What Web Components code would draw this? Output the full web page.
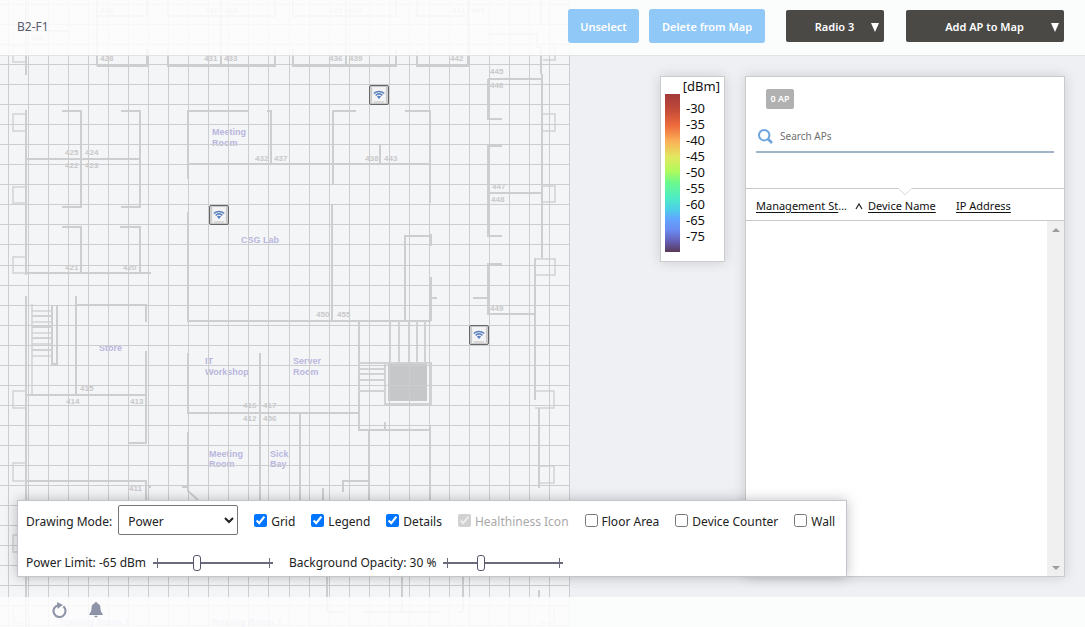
<!DOCTYPE html>
<html lang="en">
<head>
<meta charset="utf-8">
<title>B2-F1</title>
<style>
html, body { margin: 0; height: 100%; overflow: hidden; }
body { font: 12px/20px "Noto Sans", "Open Sans", sans-serif; color: #222; background: #eff0f4; }
</style>
</head>
<body>
<ap-planner></ap-planner>
<script>
function define(name, html, setup) {
  const tpl = document.createElement('template');
  tpl.innerHTML = '<style>*{box-sizing:border-box}</style>' + html;
  customElements.define(name, class extends HTMLElement {
    constructor() {
      super();
      this.attachShadow({ mode: 'open' }).append(tpl.content.cloneNode(true));
    }
    connectedCallback() { if (setup && !this.ready) { this.ready = true; setup(this, this.shadowRoot); } }
  });
}

/* Access point marker on the map */
define('ap-node', `
<style>
:host { display: block; width: 20px; height: 20px; }
svg { display: block; }
</style>
<svg width="20" height="20" viewBox="0 0 20 20">
  <rect x=".5" y=".5" width="19" height="19" rx="1.5" fill="#d0d0d0" stroke="#666"/>
  <rect x="2.5" y="1.5" width="15" height="17" rx="1" fill="#ededee" stroke="#bbb" stroke-width=".6"/>
  <rect x="4" y="2" width="12" height="14" fill="#f3f3f5"/>
  <g fill="none" stroke="#5b82bd" stroke-width="1.5">
    <path d="M4.800 8.400Q10 4.400 15.200 8.400"/><path d="M6.600 10.400Q10 7.400 13.400 10.400"/>
  </g>
  <path d="M7.800 11.600Q10 9.800 12.200 11.600L10 14Z" fill="#5b82bd"/>
  <path d="M5.500 17h9" stroke="#999" stroke-dasharray="1 1"/>
</svg>`);

/* Floor plan with its grid */
define('floor-map', `
<style>
:host { display: block; position: relative; overflow: hidden; background: #f4f5f7; }
svg { display: block; }
ap-node { position: absolute; }
.rooms { font: bold 9px/11px "Liberation Sans", Arial, sans-serif; fill: #b9b6de; }
.nums { font: bold 8px "Liberation Sans", Arial, sans-serif; fill: #c8c8ca; }
</style>
<svg width="570" height="627" viewBox="0 0 570 627">
  <g fill="none" stroke="#cdcecf" stroke-width="2">
    <path d="M26 0V75M26 110V275M26 296V627M28 31H70M97 0V66M97 16H147M97 66H147V49M147 1V16"/>
    <path d="M168 1V16H275V1M221 0V66M168 49V66H275V49M293 1V16H396V1M346 0V66M293 49V66H396V49M417 1V16H468M417 51V66H468V0"/>
    <path d="M62 111H81V207H62M121 111H140V207H121M26 159H140M62 227H81V273M120 227H140V273M26 273H151"/>
    <path d="M188 179V111H248M267 111H271V164M188 164H431M188 212V321H431M333 185V111H356M405 111H430V203M380 144V164M332 205V321M405 321V236H431M431 234V246M431 277V321M431 298H437"/>
    <path d="M487 34H537V47H541M541 0V25M541 47V74M542 74V258M488 79H542M488 79V119H502M502 146H488V236H502M488 193H542M502 264H488V314H534M473 298H488M535 258V400M539 408V488M539 590V600"/>
    <path d="M75 305H146V322M146 351V443H129M27 395H146M76 296V395M27 481H146V500M52 305V364H57V305"/>
    <path d="M188 353V413H359M188 432V491L198 500M260 353V500M300 413V500M359 321V430H431M385 422V430M369 430V500M430 426V500M343 492V481H369M323 500V488M327 577V612M402 577V612M463 577V612M328 612H345M362 612H441M457 612H463M149 487H151M182 487H187M29 620V627"/>
  </g>
  <g fill="none" stroke="#d1d2d4">
    <path stroke-width="1.5" d="M26 114H13V131H26M26 187H13V203H26M26 257H13V273H26M26 391H13V408H26M26 463H13V481H26M26 535H13V552H26M26 606H13V623H26M26 46H13V62H26M32 304V395M32 311H52M32 322H52M32 333H52M32 344H52M32 356H52"/>
    <path stroke-width="2" d="M32 316H52M32 327H52M32 338H52M32 350H52"/>
    <path stroke-width="1.5" d="M543 114H555V131H543M543 186H555V202H543M535 259H555V275H535M535 391H554V408H535M540 466H554V483H540M540 606H554V623H540M543 44H555V60H543"/>
    <path stroke-width="2" d="M390 321V362M399 321V362M409 321V362M417 321V362M425 321V362M359 363H431V406M385 363V406M359 369H385M359 374H385M359 380H385M359 391H385M385 404H431"/>
  </g>
  <path d="M388 364H427V401H388Z" fill="#c6c7c9"/>
  <g class="rooms">
    <text x="212" y="135">Meeting</text><text x="212" y="146">Room</text>
    <text x="241" y="243">CSG Lab</text><text x="99" y="351">Store</text>
    <text x="205" y="364">IT</text><text x="205" y="375">Workshop</text>
    <text x="293" y="364">Server</text><text x="293" y="375">Room</text>
    <text x="209" y="457">Meeting</text><text x="209" y="467">Room</text>
    <text x="270" y="457">Sick</text><text x="270" y="467">Bay</text>
    <text x="59" y="625">Training Room 1</text><text x="211" y="625">Training Room 2</text>
  </g>
  <g class="nums" id="nums"></g>
  <path id="grid" fill="none" stroke="#cccdce"/>
</svg>
<ap-node style="left:369px;top:85px"></ap-node>
<ap-node style="left:209px;top:205px"></ap-node>
<ap-node style="left:469px;top:325px"></ap-node>
`, (host, root) => {
  let d = '';
  for (let i = 0; i < 29; i++) d += 'M' + (8.5 + 20 * i + (i > 13 ? 1 : 0)) + ' 0V627';
  for (let i = 0; i < 32; i++) d += 'M0 ' + (4.5 + 20 * i + (i > 12 ? 1 : 0)) + 'H570';
  root.getElementById('grid').setAttribute('d', d);
  const rooms = [[429,100,13],[430,205,13],[434,224,13],[435,329,13],[440,349,13],[441,452,13],[444,471,13],[426,30,40],
    [428,100,61],[431,204,61],[433,224,61],[436,329,61],[439,349,61],[442,450,61],[445,490,74],[446,490,88],
    [425,65,155],[424,85,155],[422,65,168],[423,85,168],[432,255,161],[437,274,161],[438,365,161],[443,384,161],
    [447,492,189],[448,491,202],[421,65,270],[420,123,270],[449,490,311],[450,316,317],[455,337,317],
    [415,80,391],[414,66,404],[413,130,404],[416,243,408],[417,263,408],[412,243,421],[456,263,421],[411,129,491]];
  const g = root.getElementById('nums');
  for (const [n, x, y] of rooms) {
    const t = document.createElementNS('http://www.w3.org/2000/svg', 'text');
    t.setAttribute('x', x); t.setAttribute('y', y); t.textContent = n;
    g.append(t);
  }
});

/* Top bar buttons: plain action and drop-down */
define('action-button', `
<style>
:host { display: block; }
button { display: block; height: 34px; padding: 2px 0 0; border: 0; border-radius: 3px; background: #90c8f7;
  color: #fff; font: 600 11px/20px "Noto Sans", sans-serif; white-space: nowrap; width: 100%; }
</style>
<button type="button"><slot></slot></button>`);

define('menu-button', `
<style>
:host { display: block; }
button { display: flex; align-items: center; width: 100%; height: 32px; padding: 2px 5px 0; border: 0; border-radius: 2px;
  background: #4a4946; color: #fff; font: 600 11px/20px "Noto Sans", sans-serif; }
span { flex: 1; text-align: center; padding-left: 7px; white-space: nowrap; }
svg { display: block; }
</style>
<button type="button"><span><slot></slot></span><svg width="8" height="9" viewBox="0 0 8 9"><path d="M0 0H8L4 9Z" fill="#fff"/></svg></button>`);

define('top-bar', `
<style>
:host { display: flex; align-items: center; height: 56px; padding: 0 21px 3px 17px; background: rgba(253,253,253,.88); border-bottom: 1px solid #e2e3e6; }
h1 { flex: 1; margin: 0; padding-top: 2px; font: 12px/20px "Noto Sans", sans-serif; color: #5a5b70; }
.acts { display: flex; gap: 10px; margin-right: 21px; }
.a { width: 71px; } .b { width: 116px; } .c { width: 98px; margin-right: 22px; } .d { width: 158px; }
</style>
<h1>B2-F1</h1>
<div class="acts"><action-button class="a">Unselect</action-button><action-button class="b">Delete from Map</action-button></div>
<menu-button class="c">Radio 3</menu-button>
<menu-button class="d">Add AP to Map</menu-button>`);

/* Signal strength legend */
define('signal-legend', `
<style>
:host { display: block; width: 65px; padding: 0 4px 9px; background: #fff; border: 1px solid #ccc; box-shadow: 0 0 12px rgba(0,0,0,.15);
  font: 13px/16px "Noto Sans", sans-serif; color: #111; }
.t { text-align: right; line-height: 17px; padding-top: 1px; }
.r { display: flex; gap: 6px; }
.bar { width: 15px; height: 158px; margin-top: -1px;
  background: linear-gradient(#a33a3a, #c24a38 10%, #ee6b3c 20%, #fbb157 30%, #e0e95f 40%, #aefa5c 49%, #6bf98c 56%, #4debc6 66%, #4dcfe8 73%, #62a6ff 79%, #6a8cf0 86%, #6560b8 93%, #59395a); }
ul { margin: 5px 0 0; padding: 0; list-style: none; }
</style>
<div class="t">[dBm]</div>
<div class="r"><div class="bar"></div><ul><li>-30<li>-35<li>-40<li>-45<li>-50<li>-55<li>-60<li>-65<li>-75</ul></div>`);

/* Access point list */
define('ap-list', `
<style>
:host { display: flex; flex-direction: column; background: #fff; border: 1px solid #c9cacc; box-shadow: 0 0 12px rgba(0,0,0,.15); }
.top { position: relative; height: 112px; padding: 12px 10px 0; border-bottom: 1px solid #c8c9cb; }
.badge { display: block; width: 28px; height: 20px; margin: 0 0 12px 10px; border-radius: 2px; background: #b1b1b1; color: #fff;
  font: 600 9px/20px "Noto Sans", sans-serif; text-align: center; }
.search { display: flex; align-items: center; gap: 3px; height: 32px; padding: 0 2px; border-bottom: 2px solid #a0b5c8; }
input { flex: 1; min-width: 0; border: 0; padding: 0 4px; outline: 0; background: none; font: 10px/16px "Noto Sans", sans-serif; color: #333; }
input::placeholder { color: #6f6f6f; opacity: 1; }
.notch { position: absolute; left: 152px; top: 111px; }
svg { display: block; }
table { width: 100%; border-collapse: separate; border-spacing: 0; table-layout: fixed; }
th { height: 32px; padding: 2px 0 0; border-bottom: 1px solid #c8c9cb; text-align: left; font: 11px/20px "Noto Sans", sans-serif; white-space: nowrap; }
th div { display: flex; align-items: center; gap: 5px; }
th:first-child { padding-left: 10px; }
a { color: #111; text-decoration: underline; text-underline-offset: 2px; }
.body { flex: 1; display: flex; justify-content: flex-end; }
.scroll { display: flex; flex-direction: column; justify-content: space-between; align-items: center; width: 17px; padding: 7px 0 6px; background: #f0f0f0; }
</style>
<div class="top">
  <span class="badge">0 AP</span>
  <label class="search"><svg width="15" height="15" viewBox="0 0 15 15" fill="none" stroke="#6fa5dc"><circle cx="6.2" cy="6.2" r="5.2" stroke-width="2"/><path d="M10 10L14 14" stroke-width="2.6"/></svg>
  <input type="text" placeholder="Search APs" aria-label="Search APs"></label>
  <svg class="notch" width="14" height="8" viewBox="0 0 14 8"><path d="M0 0L7 7L14 0" fill="#fff" stroke="#d8d9dc"/></svg>
</div>
<table>
  <colgroup><col style="width:109px"><col style="width:101px"><col></colgroup>
  <thead><tr><th><a href="#">Management St</a>...</th>
  <th><div><svg width="8" height="8" viewBox="0 0 8 8"><path d="M1 7L4 2L7 7" fill="none" stroke="#222" stroke-width="1.2"/></svg><a href="#">Device Name</a></div></th>
  <th><a href="#">IP Address</a></th></tr></thead>
</table>
<div class="body"><div class="scroll">
  <svg width="8" height="4"><path d="M0 4L4 0L8 4Z" fill="#9c9c9c"/></svg>
  <svg width="8" height="4"><path d="M0 0L4 4L8 0Z" fill="#9c9c9c"/></svg>
</div></div>`);

/* Labelled check box */
define('check-option', `
<style>
:host { display: block; }
label { display: flex; align-items: center; gap: 4px; white-space: nowrap; }
:host([disabled]) { color: #a9a9a9; }
input { width: 13px; height: 13px; margin: 0; }
span { padding-top: 3px; }
</style>
<label><input type="checkbox"><span><slot></slot></span></label>`, (host, root) => {
  const box = root.querySelector('input');
  box.checked = host.hasAttribute('checked');
  box.disabled = host.hasAttribute('disabled');
});

/* Labelled slider */
define('range-option', `
<style>
:host { display: block; }
label { display: flex; align-items: center; gap: 7px; white-space: nowrap; }
input { appearance: none; width: 120px; height: 16px; margin: 0;
  background: linear-gradient(#6a6b7b,#6a6b7b) 4px 50%/1px 10px no-repeat, linear-gradient(#6a6b7b,#6a6b7b) 116px 50%/1px 10px no-repeat, linear-gradient(#6a6b7b,#6a6b7b) 0 50%/100% 2px no-repeat; }
input::-webkit-slider-thumb { appearance: none; width: 8px; height: 16px; border: 1px solid #55566a; border-radius: 3px; background: #fff; }
</style>
<label><span><slot></slot></span><input type="range" min="0" max="112"></label>`, (host, root) => {
  root.querySelector('input').value = host.getAttribute('value');
});

/* Drawing options under the map */
define('map-options', `
<style>
:host { display: block; padding: 4px 11px 3px 8px; background: #fff; border: 1px solid #c3c5cd; box-shadow: 0 0 12px rgba(0,0,0,.25); }
.row { display: flex; align-items: center; gap: 16px; height: 30px; }
.row + .row { margin-top: 18px; height: 20px; }
.mode { display: flex; align-items: center; gap: 6px; white-space: nowrap; }
.mode span { padding-top: 3px; }
select { width: 120px; height: 30px; padding: 2px 0 0 5px; border: 1px solid #767676; border-radius: 2px; background: #fff; color: #222; font: 12px/20px "Noto Sans", sans-serif; }
</style>
<div class="row">
  <label class="mode"><span>Drawing Mode:</span><select><option>Power</option></select></label>
  <check-option checked>Grid</check-option><check-option checked>Legend</check-option><check-option checked>Details</check-option>
  <check-option checked disabled>Healthiness Icon</check-option><check-option>Floor Area</check-option>
  <check-option>Device Counter</check-option><check-option>Wall</check-option>
</div>
<div class="row">
  <range-option value="40">Power Limit: -65 dBm</range-option>
  <range-option value="34">Background Opacity: 30 %</range-option>
</div>`);

define('bottom-bar', `
<style>
:host { display: flex; align-items: center; gap: 22px; height: 30px; padding: 0 51px 4px; background: rgba(253,253,253,.88); }
button { display: block; padding: 0; border: 0; background: none; }
svg { display: block; }
</style>
<button type="button" aria-label="Refresh"><svg width="16" height="16" viewBox="0 0 16 16"><path d="M12.400 4.400A6 6 0 1 1 7 3.200" fill="none" stroke="#8e94a8" stroke-width="2.100"/><path d="M6 0L12 3L6.500 6.800Z" fill="#8e94a8"/></svg></button>
<button type="button" aria-label="Alerts"><svg width="14" height="16" viewBox="0 0 14 16"><path d="M7 0c.8 0 1.200.5 1.200 1.200C10.500 1.800 11.500 3.800 11.500 6c0 3 .8 4.500 2.200 6v1H.3v-1C1.700 10.500 2.500 9 2.500 6c0-2.200 1-4.200 3.300-4.800C5.800.5 6.200 0 7 0ZM5.200 13.800h3.600Q8.500 15.500 7 15.500T5.200 13.800Z" fill="#8e94a8"/></svg></button>`);

define('ap-planner', `
<style>
:host { position: relative; display: flex; flex-direction: column; height: 100vh; overflow: hidden; }
.plan { position: absolute; left: 0; top: 0; bottom: 0; width: 570px; }
top-bar, bottom-bar { position: relative; flex: none; }
main { position: relative; flex: 1; min-height: 0; display: flex; justify-content: flex-end; align-items: flex-start; gap: 20px; padding: 20px 20px 20px 17px; }
ap-list { width: 320px; align-self: stretch; }
map-options { position: absolute; left: 17px; bottom: 20px; }
</style>
<floor-map class="plan"></floor-map>
<top-bar></top-bar>
<main><signal-legend></signal-legend><ap-list></ap-list><map-options></map-options></main>
<bottom-bar></bottom-bar>`);
</script>
</body>
</html>
